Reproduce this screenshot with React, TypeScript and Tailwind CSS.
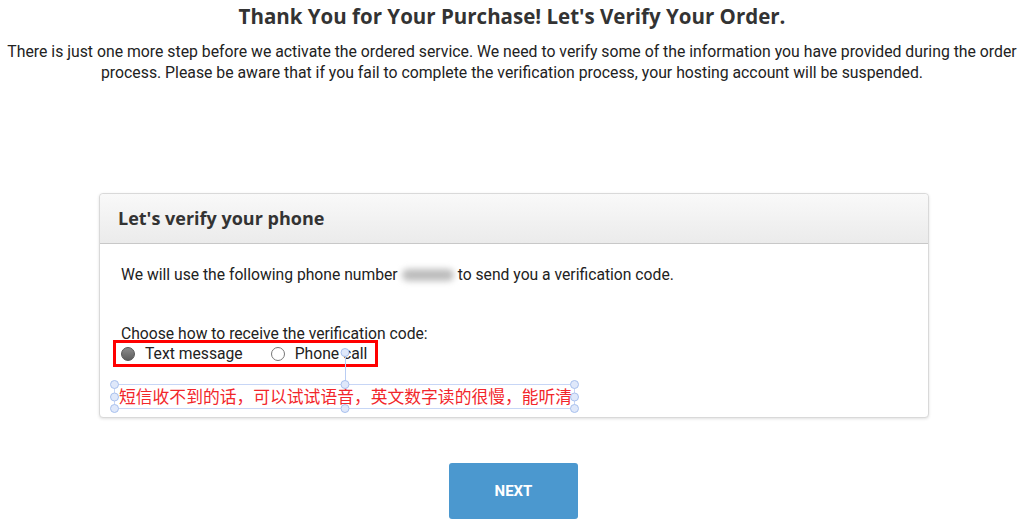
import React from 'react';

// selection handle of the pasted annotation text box
const Handle = ({ className }: { className: string }) => (
  <span className={`absolute w-[9px] h-[9px] rounded-full bg-[#dfe8fa] border border-[#a9c1ee] ${className}`} />
);

export default function App() {
  return (
    <div className="w-[1024px] h-[528px] bg-white overflow-hidden font-['Roboto',sans-serif] text-[#222]">
      {/* Page heading */}
      <h1 className="pt-[4px] text-center text-[20.5px] leading-[24px] font-bold text-[#333] font-['Open_Sans',sans-serif]">
        Thank You for Your Purchase! Let's Verify Your Order.
      </h1>
      <p className="mt-[13px] text-center text-[15.8px] leading-[21px]">
        <span className="block">
          There is just one more step before we activate the ordered service. We need to verify some of the information you have provided during the order
        </span>
        <span className="block">
          process. Please be aware that if you fail to complete the verification process, your hosting account will be suspended.
        </span>
      </p>

      {/* Card */}
      <div className="ml-[99px] mt-[110px] w-[830px] h-[225px] border border-[#d9d9d9] rounded-[4px] shadow-[0_1px_3px_rgba(0,0,0,0.12)] bg-white">
        <div className="h-[50px] flex items-center px-[18px] border-b border-[#c8c8c8] rounded-t-[4px] bg-gradient-to-b from-[#f9f9f9] to-[#ebebeb]">
          <h2 className="text-[18px] font-bold text-[#333] font-['Open_Sans',sans-serif]">Let's verify your phone</h2>
        </div>
        <div className="flex flex-col items-start px-[21px] pt-[20px]">
          <p className="text-[15.7px] leading-[22px] flex items-center">
            We will use the following phone number
            <span className="inline-block mx-[4px] w-[52px] h-[12px] rounded-full bg-[#bdbdbd] blur-[3px]" />
            to send you a verification code.
          </p>
          <p className="mt-[39px] text-[15.7px] leading-[18px]">Choose how to receive the verification code:</p>

          {/* red highlight drawn round the radio options */}
          <div className="mt-[-3px] ml-[-8px] w-[265px] h-[27px] border-[3px] border-[#f00] flex items-center pl-[5px] text-[15.7px]">
            <span className="w-[14px] h-[14px] rounded-full border border-[#555] bg-gradient-to-b from-[#8a8a8a] to-[#5e5e5e]" />
            <span className="ml-[10px]">Text message</span>
            <span className="ml-[28px] w-[14px] h-[14px] rounded-full border border-[#777] bg-white" />
            <span className="ml-[10px]">Phone call</span>
          </div>

          {/* annotation text box with its handles */}
          <div className="relative mt-[17px] ml-[-7px] w-[461px] h-[25px] border border-[#c7d6f6] pl-[4px] flex items-center whitespace-nowrap text-[16.8px] leading-[25px] text-[#f2262b] font-['Noto_Sans_CJK_SC',sans-serif]">
            短信收不到的话，可以试试语音，英文数字读的很慢，能听清
            <span className="absolute left-1/2 bottom-full w-px h-[28px] bg-[#b9cdf3]" />
            <Handle className="left-1/2 -translate-x-1/2 top-[-37px]" />
            <Handle className="-left-[5px] -top-[5px]" />
            <Handle className="left-1/2 -translate-x-1/2 -top-[5px]" />
            <Handle className="-right-[5px] -top-[5px]" />
            <Handle className="-left-[5px] top-1/2 -translate-y-1/2" />
            <Handle className="-right-[5px] top-1/2 -translate-y-1/2" />
            <Handle className="-left-[5px] -bottom-[5px]" />
            <Handle className="left-1/2 -translate-x-1/2 -bottom-[5px]" />
            <Handle className="-right-[5px] -bottom-[5px]" />
          </div>
        </div>
      </div>

      {/* Next button */}
      <div className="mt-[45px] flex justify-center">
        <button className="w-[129px] h-[56px] ml-[3px] rounded-[3px] bg-[#4b98cf] text-white text-[15px] font-bold">
          NEXT
        </button>
      </div>
    </div>
  );
}
